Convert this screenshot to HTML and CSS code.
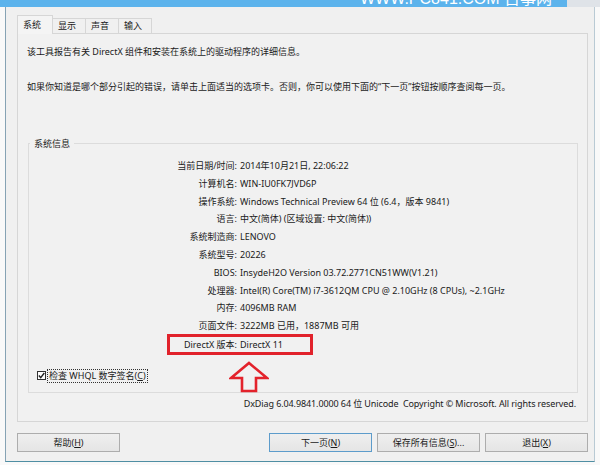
FILE: index.html
```html
<!DOCTYPE html>
<html lang="zh-CN">
<head>
    <meta charset="UTF-8">
    <title>DirectX 诊断工具</title>
    <link rel="stylesheet" href="styles.css">
</head>
<body>
    <div class="titlebar">
        <span class="watermark">WWW.PC841.COM 百事网</span>
    </div>
    <div class="window">
        <div class="tabs">
            <div class="tab active">系统</div>
            <div class="tab">显示</div>
            <div class="tab">声音</div>
            <div class="tab">输入</div>
        </div>
        <div class="panel">
            <p class="intro">该工具报告有关 DirectX 组件和安装在系统上的驱动程序的详细信息。</p>
            <p class="intro second">如果你知道是哪个部分引起的错误，请单击上面适当的选项卡。否则，你可以使用下面的“下一页”按钮按顺序查阅每一页。</p>

            <fieldset class="group">
                <legend>系统信息</legend>
                <div class="info">
                    <div class="row"><span class="label">当前日期/时间:</span><span class="value">2014年10月21日, 22:06:22</span></div>
                    <div class="row"><span class="label">计算机名:</span><span class="value">WIN-IU0FK7JVD6P</span></div>
                    <div class="row"><span class="label">操作系统:</span><span class="value">Windows Technical Preview 64 位 (6.4，版本 9841)</span></div>
                    <div class="row"><span class="label">语言:</span><span class="value">中文(简体) (区域设置: 中文(简体))</span></div>
                    <div class="row"><span class="label">系统制造商:</span><span class="value">LENOVO</span></div>
                    <div class="row"><span class="label">系统型号:</span><span class="value">20226</span></div>
                    <div class="row"><span class="label">BIOS:</span><span class="value">InsydeH2O Version 03.72.2771CN51WW(V1.21)</span></div>
                    <div class="row"><span class="label">处理器:</span><span class="value">Intel(R) Core(TM) i7-3612QM CPU @ 2.10GHz (8 CPUs), ~2.1GHz</span></div>
                    <div class="row"><span class="label">内存:</span><span class="value">4096MB RAM</span></div>
                    <div class="row"><span class="label">页面文件:</span><span class="value">3222MB 已用，1887MB 可用</span></div>
                    <div class="row mark"><span class="label">DirectX 版本:</span><span class="value">DirectX 11</span></div>
                </div>

                <div class="check-row">
                    <span class="checkbox">
                        <svg width="7" height="7" viewBox="0 0 7 7"><path d="M0.8 3.6 L2.7 5.6 L6.3 1" fill="none" stroke="#222" stroke-width="1.4"/></svg>
                    </span>
                    <span class="focus">检查 WHQL 数字签名(<u>C</u>)</span>
                    <!-- red annotation arrow pointing at the DirectX row -->
                    <svg class="arrow" width="40" height="32" viewBox="0 0 40 32">
                        <polygon points="20,2 38,17 27,17 27,30 13,30 13,17 2,17" fill="none" stroke="#e3222b" stroke-width="2.6"/>
                    </svg>
                </div>
            </fieldset>

            <div class="version">DxDiag 6.04.9841.0000 64 位 Unicode&nbsp; Copyright © Microsoft. All rights reserved.</div>
        </div>

        <div class="buttons">
            <button class="btn">帮助(<u>H</u>)</button>
            <div class="btn-group">
                <button class="btn default">下一页(<u>N</u>)</button>
                <button class="btn">保存所有信息(<u>S</u>)...</button>
                <button class="btn">退出(<u>X</u>)</button>
            </div>
        </div>
    </div>
</body>
</html>
```

FILE: styles.css
```css
body {
    margin: 0;
    background: #f9f9f9;
    font: 9px/14px "Noto Sans", "Noto Sans CJK SC", sans-serif;
    color: #1a1a1a;
}

.titlebar {
    height: 7px;
    overflow: hidden;
    background: linear-gradient(to right, #5cb3ec 567px, #dfe3e8 567px);
}

.watermark {
    display: block;
    margin: -9px 0 0 360px;
    font: 16px/16px "Liberation Sans", "Noto Sans CJK SC", sans-serif;
    color: #fff;
    white-space: nowrap;
}

.window {
    margin-left: 5px;
    width: 590px;
    box-sizing: border-box;
    padding: 9px 6px 9px 11px;
    background: #f0f0f0;
    border-left: 1px solid #86a3b4;
    border-right: 1px solid #b9cad4;
    border-bottom: 1px solid #4f8ea3;
}

/* tabs */
.tabs {
    display: flex;
    align-items: flex-end;
    height: 17px;
}

.tab {
    box-sizing: border-box;
    width: 34px;
    height: 15px;
    padding: 0 5px;
    margin-left: -1px;
    line-height: 14px;
    border: 1px solid #d6d6d6;
    border-bottom: none;
    background: #f0f0f0;
}

.tab.active {
    position: relative;
    z-index: 1;
    width: 36px;
    height: 19px;
    margin-left: 0;
    margin-bottom: -1px;
    line-height: 18px;
    background: #f4f4f4;
}

.panel {
    box-sizing: border-box;
    width: 571px;
    height: 389px;
    padding: 0 11px 0 9px;
    border: 1px solid #d6d6d6;
    background: #f1f1f1;
}

.intro {
    margin: 11px 0 0;
}

.intro.second {
    margin-top: 21px;
}

/* system info group box */
.group {
    margin: 44px -2px 0 1px;
    padding: 8px 0 9px;
    border: 1px solid #dcdcdc;
}

.group legend {
    margin-left: 1px;
    padding: 0 4px;
    line-height: 11px;
}

.row {
    display: flex;
    line-height: 17.8px;
    white-space: nowrap;
}

.label {
    width: 208px;
    text-align: right;
}

.value {
    margin-left: 3px;
}

.row.mark {
    width: 146px;
    box-sizing: border-box;
    margin: -1px 0 0 138px;
    line-height: 15px;
    border: 3px solid #e1222b;
}

.row.mark .label {
    width: 67px;
}

.check-row {
    position: relative;
    display: flex;
    align-items: center;
    margin: 14px 0 0 8px;
    height: 14px;
}

.checkbox {
    display: flex;
    align-items: center;
    justify-content: center;
    box-sizing: border-box;
    width: 9px;
    height: 9px;
    border: 1px solid #333;
    background: #fff;
}

.focus {
    margin-left: 1px;
    padding: 0 1px;
    line-height: 12px;
    border: 1px dotted #333;
}

.arrow {
    position: absolute;
    left: 192px;
    top: -8px;
}

.version {
    margin-top: 4px;
    text-align: right;
    letter-spacing: -0.1px;
}

/* bottom buttons */
.buttons {
    display: flex;
    justify-content: space-between;
    margin-top: 11px;
}

.btn-group {
    display: flex;
    gap: 5px;
}

.btn {
    box-sizing: border-box;
    width: 103px;
    height: 19px;
    padding: 0;
    font: inherit;
    color: #1a1a1a;
    background: linear-gradient(#efefef, #e5e5e5);
    border: 1px solid #adadad;
}

.btn.default {
    border-color: #5d9ccb;
}
```
